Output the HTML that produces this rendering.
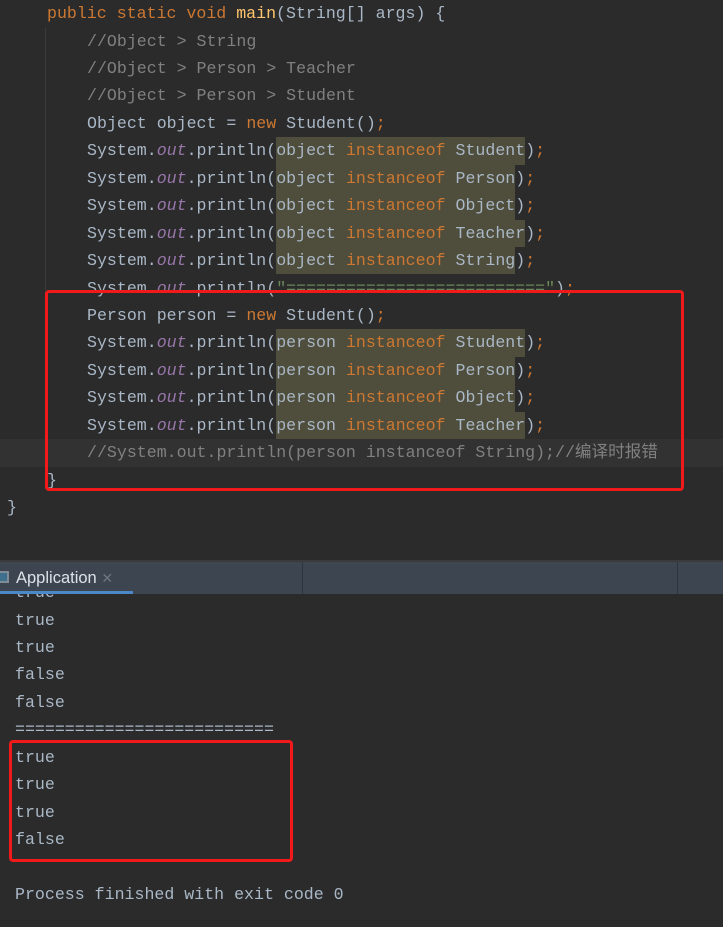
<!DOCTYPE html>
<html><head><meta charset="utf-8"><style>
*{margin:0;padding:0;box-sizing:border-box}
body{width:723px;height:927px;background:#2b2b2b;overflow:hidden;position:relative;font-family:"Liberation Mono","Noto Sans CJK SC",monospace;font-size:16.6px;color:#a9b7c6}
.l{position:absolute;left:0;height:27.45px;line-height:27.45px;white-space:pre}
.k{color:#cc7832}.m{color:#ffc66d}.o{color:#9876aa;font-style:italic}.c{color:#808080}.s{color:#6a8759}
.h{background:#4f4d3b;display:inline-block;height:27.45px}
.box{position:absolute;border:3px solid #f01a1a;border-radius:4px}
.cd{position:absolute;left:0;top:1px;width:723px;height:530px}
</style></head><body>
<div style="position:absolute;left:0;top:439px;width:723px;height:28px;background:#323232"></div>
<div style="position:absolute;left:45px;top:28px;width:1px;height:440px;background:#3b3b3b"></div>
<div class="cd">
<div class="l" style="top:-1px;left:47px"><span class="k">public static void </span><span class="m">main</span>(String[] args) {</div>
<div class="l c" style="top:26.5px;left:87px">//Object &gt; String</div>
<div class="l c" style="top:54px;left:87px">//Object &gt; Person &gt; Teacher</div>
<div class="l c" style="top:81.4px;left:87px">//Object &gt; Person &gt; Student</div>
<div class="l" style="top:108.8px;left:87px">Object object = <span class="k">new </span>Student()<span class="k">;</span></div>
<div class="l" style="top:136.3px;left:87px">System.<span class="o">out</span>.println(<span class="h">object <span class="k">instanceof</span> Student</span>)<span class="k">;</span></div>
<div class="l" style="top:163.7px;left:87px">System.<span class="o">out</span>.println(<span class="h">object <span class="k">instanceof</span> Person</span>)<span class="k">;</span></div>
<div class="l" style="top:191.2px;left:87px">System.<span class="o">out</span>.println(<span class="h">object <span class="k">instanceof</span> Object</span>)<span class="k">;</span></div>
<div class="l" style="top:218.6px;left:87px">System.<span class="o">out</span>.println(<span class="h">object <span class="k">instanceof</span> Teacher</span>)<span class="k">;</span></div>
<div class="l" style="top:246px;left:87px">System.<span class="o">out</span>.println(<span class="h">object <span class="k">instanceof</span> String</span>)<span class="k">;</span></div>
<div class="l" style="top:273.5px;left:87px">System.<span class="o">out</span>.println(<span class="s">"=========================="</span>)<span class="k">;</span></div>
<div class="l" style="top:301px;left:87px">Person person = <span class="k">new </span>Student()<span class="k">;</span></div>
<div class="l" style="top:328.4px;left:87px">System.<span class="o">out</span>.println(<span class="h">person <span class="k">instanceof</span> Student</span>)<span class="k">;</span></div>
<div class="l" style="top:355.8px;left:87px">System.<span class="o">out</span>.println(<span class="h">person <span class="k">instanceof</span> Person</span>)<span class="k">;</span></div>
<div class="l" style="top:383.3px;left:87px">System.<span class="o">out</span>.println(<span class="h">person <span class="k">instanceof</span> Object</span>)<span class="k">;</span></div>
<div class="l" style="top:410.7px;left:87px">System.<span class="o">out</span>.println(<span class="h">person <span class="k">instanceof</span> Teacher</span>)<span class="k">;</span></div>
<div class="l c" style="top:438.2px;left:87px">//System.out.println(person instanceof String);//编译时报错</div>
<div class="l" style="top:465.6px;left:47px">}</div>
<div class="l" style="top:493px;left:7px">}</div>
</div>
<div class="box" style="left:45px;top:290px;width:639px;height:201px"></div>
<div style="position:absolute;left:0;top:560px;width:723px;height:2px;background:#3a3a3a"></div>
<div style="position:absolute;left:0;top:562px;width:723px;height:32px;background:#3c4550"></div>
<div style="position:absolute;left:302px;top:562px;width:1px;height:32px;background:#2f353c"></div>
<div style="position:absolute;left:677px;top:562px;width:1px;height:32px;background:#2f353c"></div>
<div style="position:absolute;left:0;top:591px;width:133px;height:3px;background:#4a88c7"></div>
<div style="position:absolute;left:-2px;top:571px;width:11px;height:12px;border:2px solid #7f8b96;background:#3e6f8c"></div>
<div style="position:absolute;left:16px;top:566px;font-family:'Liberation Sans',sans-serif;font-size:16.5px;color:#dde2e8;line-height:24px">Application <span style="color:#6e7780;font-size:14px">✕</span></div>
<div style="position:absolute;left:0;top:594px;width:723px;height:333px;overflow:hidden">
<div class="l" style="top:-15px;left:15px">true</div>
<div class="l" style="top:12.5px;left:15px">true</div>
<div class="l" style="top:40px;left:15px">true</div>
<div class="l" style="top:67.4px;left:15px">false</div>
<div class="l" style="top:94.8px;left:15px">false</div>
<div class="l" style="top:122.3px;left:15px">==========================</div>
<div class="l" style="top:149.7px;left:15px">true</div>
<div class="l" style="top:177.2px;left:15px">true</div>
<div class="l" style="top:204.6px;left:15px">true</div>
<div class="l" style="top:232px;left:15px">false</div>
<div class="l" style="top:287px;left:15px">Process finished with exit code 0</div>
</div>
<div class="box" style="left:9px;top:740px;width:284px;height:122px"></div>
</body></html>
